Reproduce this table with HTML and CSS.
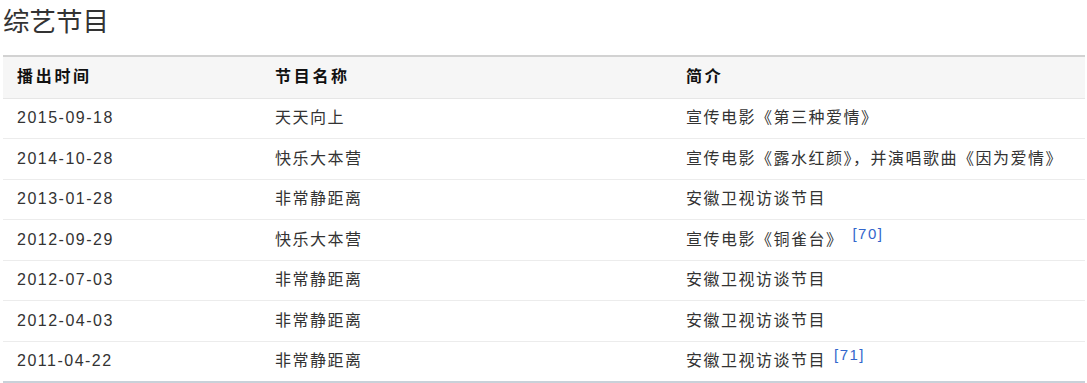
FILE: index.html
```html
<!DOCTYPE html>
<html lang="zh">
<head>
<meta charset="utf-8">
<link rel="stylesheet" href="styles.css">
</head>
<body>
<div class="page">
  <h2 class="title">综艺节目</h2>
  <table class="shows">
    <colgroup>
      <col class="c1"><col class="c2"><col class="c3">
    </colgroup>
    <thead>
      <tr><th>播出时间</th><th>节目名称</th><th>简介</th></tr>
    </thead>
    <tbody>
      <tr><td>2015-09-18</td><td>天天向上</td><td>宣传电影《第三种爱情》</td></tr>
      <tr><td>2014-10-28</td><td>快乐大本营</td><td>宣传电影《露水红颜》，并演唱歌曲《因为爱情》</td></tr>
      <tr><td>2013-01-28</td><td>非常静距离</td><td>安徽卫视访谈节目</td></tr>
      <tr><td>2012-09-29</td><td>快乐大本营</td><td>宣传电影《铜雀台》 <sup class="ref">[70]</sup></td></tr>
      <tr><td>2012-07-03</td><td>非常静距离</td><td>安徽卫视访谈节目</td></tr>
      <tr><td>2012-04-03</td><td>非常静距离</td><td>安徽卫视访谈节目</td></tr>
      <tr><td>2011-04-22</td><td>非常静距离</td><td>安徽卫视访谈节目<sup class="ref tight">[71]</sup></td></tr>
    </tbody>
  </table>
</div>
</body>
</html>
```

FILE: styles.css
```css
html, body {
  margin: 0;
  padding: 0;
  background: #ffffff;
}

body {
  font-family: "Liberation Sans", "Noto Sans CJK SC", sans-serif;
  color: #333333;
}

.page {
  padding: 0 2px 0 3px;
}

.title {
  margin: 0 0 10px 0;
  font-size: 26.5px;
  line-height: 45px;
  font-weight: normal;
  color: #333333;
  letter-spacing: 0;
}

.shows {
  width: 1082px;
  border-collapse: collapse;
  table-layout: fixed;
  font-size: 16px;
  letter-spacing: 1.5px;
}

.c1 { width: 258px; }
.c2 { width: 411px; }
.c3 { width: 413px; }

.shows thead tr {
  background: #f6f6f6;
  border-top: 2px solid #d2d2d2;
  border-bottom: 1px solid #e6e6e6;
}

.shows th {
  height: 42px;
  padding: 0 14px;
  text-align: left;
  font-weight: bold;
  color: #111111;
  letter-spacing: 2.7px;
  line-height: 24px;
  box-sizing: border-box;
}

.shows td {
  height: 40.5px;
  padding: 0 14px;
  line-height: 24px;
  color: #333333;
  border-bottom: 1px solid #ececec;
  white-space: nowrap;
  box-sizing: border-box;
}

.shows tbody tr:last-child td {
  border-bottom: 2px solid #c9d1d9;
}

.ref {
  font-size: 15px;
  color: #3366cc;
  line-height: 0;
  vertical-align: 6px;
  margin-left: 3px;
}

.ref.tight {
  margin-left: 8px;
}
```
